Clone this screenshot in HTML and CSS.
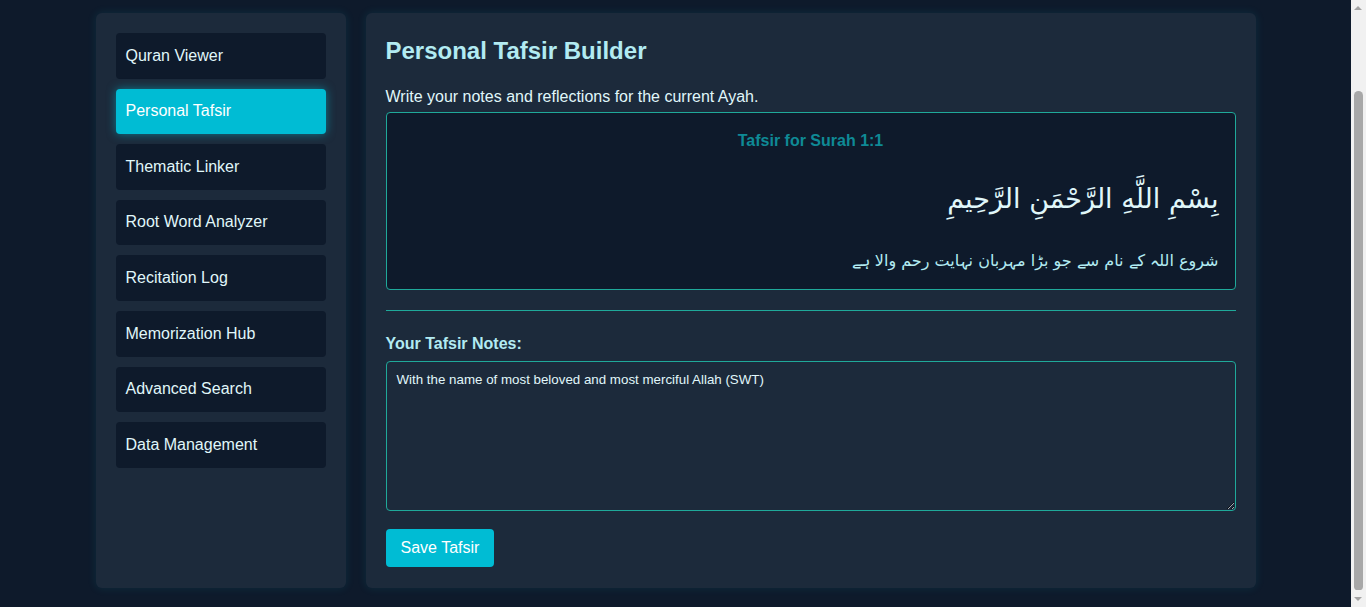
FILE: index.html
```html
<!DOCTYPE html>
<html lang="en">
<head>
<meta charset="utf-8">
<title>Personal Tafsir Builder</title>
<link rel="stylesheet" href="styles.css">
</head>
<body>
<div class="app">
  <aside class="sidebar">
    <nav class="nav">
      <button class="nav-item">Quran Viewer</button>
      <button class="nav-item active">Personal Tafsir</button>
      <button class="nav-item">Thematic Linker</button>
      <button class="nav-item">Root Word Analyzer</button>
      <button class="nav-item">Recitation Log</button>
      <button class="nav-item">Memorization Hub</button>
      <button class="nav-item">Advanced Search</button>
      <button class="nav-item">Data Management</button>
    </nav>
  </aside>
  <main class="main">
    <h2 class="title">Personal Tafsir Builder</h2>
    <p class="intro">Write your notes and reflections for the current Ayah.</p>
    <div class="ayah-box">
      <h4 class="ayah-ref">Tafsir for Surah 1:1</h4>
      <p class="arabic" dir="rtl" lang="ar">بِسْمِ اللَّهِ الرَّحْمَنِ الرَّحِيمِ</p>
      <p class="urdu" dir="rtl" lang="ur">شروع اللہ کے نام سے جو بڑا مہربان نہایت رحم والا ہے</p>
    </div>
    <hr class="divider">
    <label class="notes-label" for="notes">Your Tafsir Notes:</label>
    <textarea id="notes" class="notes">With the name of most beloved and most merciful Allah (SWT)</textarea>
    <button class="save-btn">Save Tafsir</button>
  </main>
</div>
<div class="scrollbar" aria-hidden="true">
  <span class="sb-arrow sb-up"></span>
  <span class="sb-track"><span class="sb-thumb"></span></span>
  <span class="sb-arrow sb-down"></span>
</div>
</body>
</html>
```

FILE: styles.css
```css
html {
  overflow: hidden;
}
body {
  margin: 0;
  padding-right: 15px;
  background: #0e1a2b;
  font-family: "Liberation Sans", Arial, sans-serif;
  color: #e0f7fa;
}
.app {
  display: flex;
  gap: 20px;
  width: 1160px;
  margin: 0 auto;
  padding: 13px 0 19px;
  align-items: stretch;
}
.sidebar {
  width: 250px;
  flex: none;
  box-sizing: border-box;
  padding: 20px;
  background: #1c2a3b;
  border-radius: 6px;
  box-shadow: 0 0 10px rgba(0, 188, 212, 0.12);
}
.nav {
  display: flex;
  flex-direction: column;
  gap: 10px;
}
.nav-item {
  display: block;
  width: 100%;
  text-align: left;
  font-family: "Liberation Sans", Arial, sans-serif;
  font-size: 16px;
  line-height: 18.4px;
  padding: 13.6px 10px;
  border: none;
  border-radius: 4px;
  background: #0e1a2b;
  color: #e0f7fa;
}
.nav-item.active {
  background: #00bcd4;
  color: #ffffff;
  box-shadow: 0 0 10px rgba(0, 188, 212, 0.55);
}
.main {
  flex: 1;
  box-sizing: border-box;
  padding: 20px 20px 21px;
  background: #1c2a3b;
  border-radius: 6px;
  box-shadow: 0 0 10px rgba(0, 188, 212, 0.12);
}
.title {
  margin: 4px 0 23px;
  font-size: 24px;
  font-weight: bold;
  color: #b2ebf2;
}
.intro {
  margin: 0 0 6px;
  font-size: 16px;
  color: #e0f7fa;
}
.ayah-box {
  border: 1px solid #1fa99a;
  border-radius: 4px;
  background: #0e1a2b;
  padding: 19px 16px 16px;
}
.ayah-ref {
  margin: 0;
  text-align: center;
  font-size: 16px;
  font-weight: bold;
  color: #0e8a96;
}
.arabic {
  margin: 29px 0 0;
  text-align: right;
  font-family: "DejaVu Sans", sans-serif;
  font-size: 27px;
  line-height: 39px;
  color: #e0f7fa;
}
.urdu {
  margin: 30px 0 0;
  text-align: right;
  font-family: "DejaVu Sans", sans-serif;
  font-size: 16px;
  line-height: 25px;
  color: #b2ebf2;
}
.divider {
  height: 0;
  margin: 20px 0 24px;
  border: 0;
  border-top: 1px solid #1fa99a;
}
.notes-label {
  display: block;
  margin-bottom: 8px;
  font-size: 16px;
  font-weight: bold;
  color: #b2ebf2;
}
.notes {
  display: block;
  box-sizing: border-box;
  width: 100%;
  height: 150px;
  margin: 0 0 18px;
  padding: 10px;
  border: 1px solid #1fa99a;
  border-radius: 4px;
  background: #1c2a3b;
  color: #e0f7fa;
  font-family: "Liberation Sans", Arial, sans-serif;
  font-size: 13.333px;
  resize: vertical;
}
.save-btn {
  padding: 10px 15px;
  font-family: "Liberation Sans", Arial, sans-serif;
  font-size: 16px;
  line-height: 18.4px;
  border: none;
  border-radius: 4px;
  background: #00bcd4;
  color: #ffffff;
}
.scrollbar {
  position: fixed;
  top: 0;
  right: 0;
  bottom: 0;
  width: 15px;
  background: #f1f1f1;
  display: flex;
  flex-direction: column;
  align-items: center;
}
.sb-arrow {
  flex: none;
  height: 17px;
  width: 15px;
  position: relative;
}
.sb-up::after,
.sb-down::after {
  content: "";
  position: absolute;
  left: 3px;
  border-left: 4.5px solid transparent;
  border-right: 4.5px solid transparent;
}
.sb-up::after {
  top: 6px;
  border-bottom: 4.5px solid #a3a3a3;
}
.sb-down::after {
  bottom: 6px;
  border-top: 4.5px solid #a3a3a3;
}
.sb-track {
  flex: 1;
  width: 15px;
  display: flex;
  flex-direction: column;
  align-items: center;
  justify-content: flex-end;
}
.sb-thumb {
  width: 9px;
  height: 499px;
  border-radius: 5px 5px 4px 4px;
  background: #a8a8a8;
}
```
